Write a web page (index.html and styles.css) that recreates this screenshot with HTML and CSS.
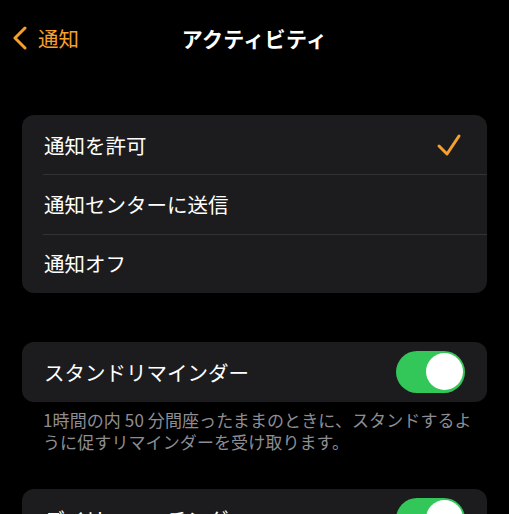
FILE: index.html
```html
<!DOCTYPE html>
<html lang="ja">
<head>
	<meta charset="UTF-8">
	<title>アクティビティ</title>
	<link rel="stylesheet" href="styles.css">
</head>
<body>
	<div class="nav">
		<a class="back">
			<svg class="chev" width="16" height="24" viewBox="0 0 16 24">
				<polyline points="13,2 3,12 13,22" fill="none" stroke="#f5a02c" stroke-width="3" stroke-linecap="round" stroke-linejoin="round"/>
			</svg>
			<span>通知</span>
		</a>
		<div class="title">アクティビティ</div>
	</div>

	<div class="group first">
		<div class="row">
			<span>通知を許可</span>
			<svg class="check" width="26" height="24" viewBox="0 0 26 24">
				<polyline points="3,13 11,21 23,3" fill="none" stroke="#f5a02c" stroke-width="3" stroke-linecap="round" stroke-linejoin="round"/>
			</svg>
		</div>
		<div class="row">
			<span>通知センターに送信</span>
		</div>
		<div class="row">
			<span>通知オフ</span>
		</div>
	</div>

	<div class="group second">
		<div class="row">
			<span>スタンドリマインダー</span>
			<div class="toggle"><div class="knob"></div></div>
		</div>
	</div>
	<p class="note">1時間の内 50 分間座ったままのときに、スタンドするよ<br>うに促すリマインダーを受け取ります。</p>

	<div class="group third">
		<div class="row">
			<span>デイリーコーチング</span>
			<div class="toggle"><div class="knob"></div></div>
		</div>
	</div>
</body>
</html>
```

FILE: styles.css
```css
body{
	margin:0;
	background:#000;
	color:#fff;
	font-family:"Noto Sans CJK JP","Noto Sans",sans-serif;
	overflow:hidden;
	height:514px;
}
.nav{
	position:relative;
	height:40px;
	margin-top:18px;
	display:flex;
	align-items:center;
	justify-content:center;
}
.back{
	position:absolute;
	left:12px;
	top:0;
	height:40px;
	display:flex;
	align-items:center;
	gap:10px;
	color:#f5a02c;
	font-size:20.5px;
}
.chev{
	display:block;
}
.title{
	font-size:21px;
	font-weight:bold;
	letter-spacing:0.3px;
}
.group{
	margin:0 22px;
	background:#1c1c1e;
	border-radius:12px;
	overflow:hidden;
}
.first{
	margin-top:57px;
}
.second{
	margin-top:49px;
}
.third{
	margin-top:36px;
}
.row{
	height:59.33px;
	box-sizing:border-box;
	padding:0 22px;
	display:flex;
	align-items:center;
	justify-content:space-between;
	font-size:20.5px;
	position:relative;
}
.row + .row::before{
	content:"";
	position:absolute;
	left:21px;
	right:0;
	top:0;
	border-top:1px solid #323236;
}
.second .row,
.third .row{
	height:60px;
}
.check{
	display:block;
	margin-right:3px;
}
.toggle{
	width:69px;
	height:42px;
	border-radius:21px;
	background:#33c659;
	position:relative;
}
.knob{
	position:absolute;
	right:2.5px;
	top:2.5px;
	width:37px;
	height:37px;
	border-radius:50%;
	background:#fff;
}
.note{
	margin:7px 0 0;
	padding:0 10px 0 43px;
	font-size:17px;
	line-height:22px;
	letter-spacing:0.1px;
	color:#8d8d93;
	white-space:nowrap;
}
```
